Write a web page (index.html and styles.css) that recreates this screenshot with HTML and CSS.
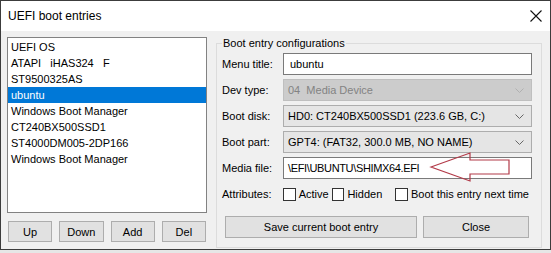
FILE: index.html
```html
<!DOCTYPE html>
<html lang="en">
<head>
  <meta charset="UTF-8">
  <title>UEFI boot entries</title>
  <link rel="stylesheet" href="styles.css">
</head>
<body>
<div class="window">
  <div class="titlebar">
    <span class="title">UEFI boot entries</span>
    <svg class="close" width="12" height="12" viewBox="0 0 12 12">
      <path d="M0.5 0.5 L11.5 11.5 M11.5 0.5 L0.5 11.5" stroke="#111" stroke-width="1.1" fill="none"/>
    </svg>
  </div>

  <div class="content">
    <div class="left">
      <div class="listbox">
        <div class="item">UEFI OS</div>
        <div class="item">ATAPI&nbsp;&nbsp; iHAS324&nbsp;&nbsp; F</div>
        <div class="item">ST9500325AS</div>
        <div class="item selected">ubuntu</div>
        <div class="item">Windows Boot Manager</div>
        <div class="item">CT240BX500SSD1</div>
        <div class="item">ST4000DM005-2DP166</div>
        <div class="item">Windows Boot Manager</div>
      </div>
      <div class="list-buttons">
        <button class="btn">Up</button>
        <button class="btn">Down</button>
        <button class="btn">Add</button>
        <button class="btn">Del</button>
      </div>
    </div>

    <fieldset class="group">
      <legend>Boot entry configurations</legend>
      <div class="form">
        <label>Menu title:</label>
        <div class="edit">ubuntu</div>

        <label>Dev type:</label>
        <div class="combo disabled">
          <span>04&nbsp; Media Device</span>
          <svg width="9" height="5" viewBox="0 0 9 5"><path d="M0.5 0.5 L4.5 4.5 L8.5 0.5" stroke="#b0b0b0" fill="none"/></svg>
        </div>

        <label>Boot disk:</label>
        <div class="combo">
          <span>HD0: CT240BX500SSD1 (223.6 GB, C:)</span>
          <svg width="9" height="5" viewBox="0 0 9 5"><path d="M0.5 0.5 L4.5 4.5 L8.5 0.5" stroke="#666" fill="none"/></svg>
        </div>

        <label>Boot part:</label>
        <div class="combo">
          <span>GPT4: (FAT32, 300.0 MB, NO NAME)</span>
          <svg width="9" height="5" viewBox="0 0 9 5"><path d="M0.5 0.5 L4.5 4.5 L8.5 0.5" stroke="#666" fill="none"/></svg>
        </div>

        <label>Media file:</label>
        <div class="edit path">\EFI\UBUNTU\SHIMX64.EFI</div>

        <label class="attr-label">Attributes:</label>
        <div class="attrs">
          <span class="check"></span><span class="check-text">Active</span>
          <span class="check"></span><span class="check-text">Hidden</span>
          <span class="check wide"></span><span class="check-text">Boot this entry next time</span>
        </div>
      </div>
      <div class="main-buttons">
        <button class="btn">Save current boot entry</button>
        <button class="btn">Close</button>
      </div>
    </fieldset>
  </div>

  <!-- red annotation arrow drawn over the media file box -->
  <svg class="arrow" width="84" height="32" viewBox="0 0 84 32">
    <polygon points="2,16 41,2 41,9 80,9 80,23 41,23 41,30" fill="none" stroke="#b23a48" stroke-width="1.2"/>
  </svg>
</div>
</body>
</html>
```

FILE: styles.css
```css
body {
  margin: 0;
  background: #e6e6e6;
  font-family: "Liberation Sans", Arial, sans-serif;
  font-size: 11px;
  color: #000;
}

.window {
  position: relative;
  width: 551px;
  height: 250px;
  box-sizing: border-box;
  border: 1px solid #3c3c3c;
  background: #f0f0f0;
}

.titlebar {
  height: 30px;
  background: #fff;
  display: flex;
  align-items: center;
  justify-content: space-between;
  padding: 0 8px 0 7px;
}

.title {
  font-size: 12px;
}

.content {
  display: flex;
  padding: 6px 0 0 6px;
}

.left {
  width: 200px;
  flex: none;
  display: flex;
  flex-direction: column;
}

.listbox {
  height: 176px;
  box-sizing: border-box;
  border: 1px solid #828282;
  background: #fff;
  padding: 1px 0;
}

.item {
  height: 16px;
  line-height: 16px;
  padding-left: 3px;
  white-space: nowrap;
}

.item.selected {
  background: #0078d7;
  color: #fff;
}

.list-buttons {
  display: grid;
  grid-template-columns: repeat(4, 1fr);
  gap: 7px;
  margin-top: 8px;
  padding: 0 1px;
}

.btn {
  height: 21px;
  padding: 0;
  border: 1px solid #adadad;
  background: #e1e1e1;
  font-family: "Liberation Sans", Arial, sans-serif;
  font-size: 11px;
  color: #000;
}

.group {
  flex: none;
  margin: -1px 0 0 9px;
  width: 326px;
  box-sizing: border-box;
  border: 1px solid #dcdcdc;
  padding: 0 9px 9px 5px;
  min-width: 0;
}

.group legend {
  padding: 0 1px;
  line-height: 15px;
}

.form {
  display: grid;
  grid-template-columns: 61px minmax(0, 1fr);
  grid-auto-rows: 22px;
  row-gap: 4px;
  padding-top: 2px;
  align-items: center;
}

.form .attrs,
.form .attr-label {
  height: 15px;
  line-height: 15px;
}

.form > :nth-last-child(-n+2) {
  margin-top: 1px;
}

.edit {
  height: 22px;
  box-sizing: border-box;
  border: 1px solid #7a7a7a;
  background: #fff;
  padding: 0 6px;
  line-height: 20px;
  white-space: nowrap;
}

.edit.path {
  padding-left: 4px;
  letter-spacing: -0.35px;
}

.combo {
  height: 22px;
  box-sizing: border-box;
  border: 1px solid #adadad;
  background: #e5e5e5;
  padding: 0 7px 0 4px;
  display: flex;
  align-items: center;
  justify-content: space-between;
  white-space: nowrap;
}

.combo.disabled {
  background: #cccccc;
  border-color: #bfbfbf;
  color: #838383;
}

.attrs {
  display: flex;
  align-items: center;
  white-space: nowrap;
}

.check {
  width: 13px;
  height: 13px;
  box-sizing: border-box;
  border: 1px solid #333;
  background: #fff;
  margin-right: 3px;
}

.check.wide {
  margin-left: 10px;
}

.check-text {
  margin-right: 3px;
}

.main-buttons {
  display: grid;
  grid-template-columns: 192px 106px;
  gap: 6px;
  margin-top: 11px;
  padding-left: 3px;
}

.main-buttons .btn {
  height: 22px;
}

.arrow {
  position: absolute;
  left: 428px;
  top: 150px;
}
```
